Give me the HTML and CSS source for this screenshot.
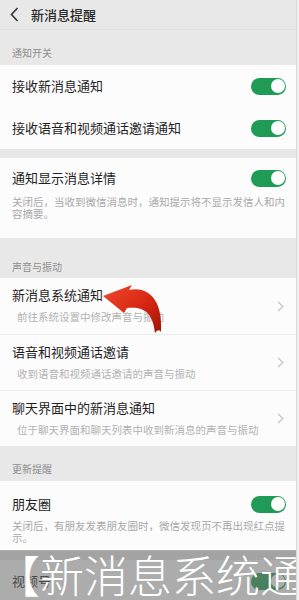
FILE: index.html
```html
<!DOCTYPE html>
<html lang="zh-CN">
<head>
    <meta charset="UTF-8">
    <meta name="viewport" content="width=device-width, initial-scale=1.0">
    <title>新消息提醒</title>
    <link rel="stylesheet" href="styles.css">
</head>
<body>
    <div class="screen">
        <div class="header">
            <svg class="back" width="9" height="15" viewBox="0 0 9 15">
                <path d="M7.5 1 L1.5 7.5 L7.5 14" fill="none" stroke="#333" stroke-width="1.6"/>
            </svg>
            <span class="header-title">新消息提醒</span>
        </div>

        <div class="section-label first">通知开关</div>
        <div class="block">
            <div class="row">
                <span class="row-title">接收新消息通知</span>
                <span class="switch"></span>
            </div>
            <div class="row">
                <span class="row-title">接收语音和视频通话邀请通知</span>
                <span class="switch"></span>
            </div>
        </div>

        <div class="gap"></div>
        <div class="block">
            <div class="item">
                <div class="item-head">
                    <span class="row-title">通知显示消息详情</span>
                    <span class="switch"></span>
                </div>
                <p class="desc">关闭后，当收到微信消息时，通知提示将不显示发信人和内容摘要。</p>
            </div>
        </div>

        <div class="section-label sound">声音与振动</div>
        <div class="block">
            <div class="link-row">
                <div class="link-text">
                    <span class="row-title">新消息系统通知</span>
                    <span class="sub">前往系统设置中修改声音与振动</span>
                </div>
                <span class="chevron"></span>
            </div>
            <div class="link-row">
                <div class="link-text">
                    <span class="row-title">语音和视频通话邀请</span>
                    <span class="sub">收到语音和视频通话邀请的声音与振动</span>
                </div>
                <span class="chevron"></span>
            </div>
            <div class="link-row">
                <div class="link-text">
                    <span class="row-title">聊天界面中的新消息通知</span>
                    <span class="sub">位于聊天界面和聊天列表中收到新消息的声音与振动</span>
                </div>
                <span class="chevron"></span>
            </div>
        </div>

        <div class="section-label">更新提醒</div>
        <div class="block">
            <div class="item moments">
                <div class="item-head">
                    <span class="row-title">朋友圈</span>
                    <span class="switch"></span>
                </div>
                <p class="desc">关闭后，有朋友发表朋友圈时，微信发现页不再出现红点提示。</p>
            </div>
        </div>

        <div class="gap"></div>
        <div class="block">
            <div class="row">
                <span class="row-title">视频号</span>
                <span class="switch"></span>
            </div>
        </div>

        <!-- red pointer drawn over the list -->
        <svg class="arrow" width="75" height="60" viewBox="0 0 75 60">
            <defs>
                <linearGradient id="red" x1="0" y1="0" x2="1" y2="1">
                    <stop offset="0" stop-color="#f04a2c"/>
                    <stop offset="0.6" stop-color="#d42411"/>
                    <stop offset="1" stop-color="#9e1606"/>
                </linearGradient>
            </defs>
            <path d="M8 16 L37 5 L34 10 C52 6 68 18 66 52 C64 49 62 50 60 53 C58 32 48 26 32 28 L29 33 Z" fill="url(#red)"/>
        </svg>

        <!-- video caption band -->
        <div class="caption">【新消息系统通</div>
    </div>
</body>
</html>
```

FILE: styles.css
```css
* {
    margin: 0;
    padding: 0;
    box-sizing: border-box;
}

body {
    width: 299px;
    height: 600px;
    overflow: hidden;
    background: #f0f0f0;
    font-family: "Noto Sans CJK SC", "Noto Sans", sans-serif;
}

.screen {
    position: relative;
    width: 297px;
    height: 600px;
    background: #e9e8e9;
    border-right: 1px solid #d3dcda;
    overflow: hidden;
}

.header {
    height: 30px;
    display: flex;
    align-items: center;
    gap: 12px;
    padding-left: 10px;
    border-bottom: 1px solid #e2e1e2;
}

.back {
    display: block;
}

.header-title {
    font-size: 13px;
    line-height: 14px;
    font-weight: 500;
    color: #2a2a2a;
}

.section-label {
    padding: 16px 12px 5px;
    font-size: 10px;
    line-height: 14px;
    color: #8e8e8e;
}

.section-label.first {
    padding-top: 16px;
}

.section-label.sound {
    padding-top: 22px;
    padding-bottom: 4px;
}

.gap {
    height: 9px;
}

.block {
    background: #fdfcfd;
}

.row {
    height: 42px;
    display: flex;
    align-items: center;
    justify-content: space-between;
    padding: 0 10px 0 12px;
}

.row-title {
    font-size: 13px;
    line-height: 14px;
    color: #1f1f1f;
}

.switch {
    position: relative;
    width: 35px;
    height: 17px;
    border-radius: 9px;
    background: #1f9b56;
    flex-shrink: 0;
}

.switch::after {
    content: '';
    position: absolute;
    top: 1.5px;
    right: 1.5px;
    width: 14px;
    height: 14px;
    border-radius: 50%;
    background: #fff;
}

.item {
    padding: 13px 10px 18px 12px;
}

.item-head {
    display: flex;
    align-items: center;
    justify-content: space-between;
    height: 14px;
}

.desc {
    margin-top: 11px;
    margin-right: -6px;
    font-size: 10.5px;
    line-height: 12px;
    color: #a9a9a9;
}

.item.moments {
    padding-top: 16px;
    padding-bottom: 7px;
}

.item.moments .desc {
    margin-top: 9px;
    margin-right: 0;
}

.link-row {
    height: 56px;
    display: flex;
    align-items: center;
    justify-content: space-between;
    padding: 0 12px;
    position: relative;
}

.link-row + .link-row {
    border-top: 1px solid #ecebec;
}

.link-text {
    display: flex;
    flex-direction: column;
    gap: 9px;
    padding-bottom: 1px;
}

.sub {
    padding-left: 5px;
    font-size: 10.5px;
    line-height: 12px;
    color: #b2b2b2;
}

.chevron {
    width: 7px;
    height: 7px;
    border-top: 1.2px solid #b8b8b8;
    border-right: 1.2px solid #b8b8b8;
    transform: rotate(45deg);
    margin-right: 2px;
}

.arrow {
    position: absolute;
    left: 95px;
    top: 280px;
}

.caption {
    position: absolute;
    left: 0;
    top: 550px;
    width: 100%;
    height: 50px;
    text-indent: -4px;
    background: rgba(105, 105, 105, 0.55);
    color: #fff;
    font-size: 44px;
    font-weight: 300;
    line-height: 48px;
    white-space: nowrap;
}
```
